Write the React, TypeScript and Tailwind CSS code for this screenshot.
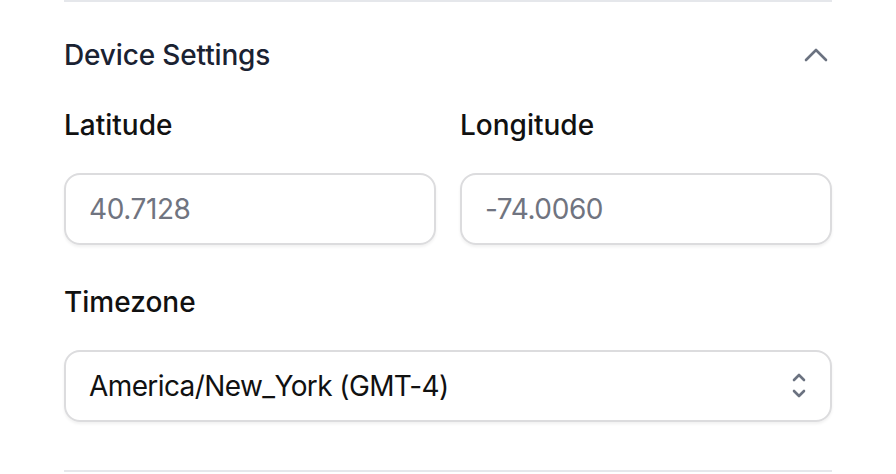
import React from "react";

export default function App() {
  const font = { fontFamily: "Inter, 'Noto Sans', sans-serif" };
  return (
    <div className="w-[896px] h-[474px] bg-white overflow-hidden" style={font}>
      <div className="mx-[64px] border-t-2 border-b-2 border-[#e5e7eb] h-[472px] mt-[0px]">
        <div className="flex items-center justify-between h-[40px] mt-[33px]">
          <span className="text-[28px] leading-[40px] font-medium text-[#1a2232] tracking-[-0.15px]">Device Settings</span>
          <svg width="24" height="14" viewBox="0 0 24 14" className="mr-[4px]">
            <path d="M2 12 L12 2 L22 12" fill="none" stroke="#6b7280" strokeWidth="2.6" strokeLinecap="round" strokeLinejoin="round" />
          </svg>
        </div>
        <div className="grid grid-cols-2 gap-[24px] mt-[30px]">
          <div className="flex flex-col">
            <label className="text-[28px] leading-[40px] font-medium text-[#111]">Latitude</label>
            <div className="mt-[28px] h-[72px] rounded-[16px] border-2 border-[#dcdcde] shadow-[0_2px_3px_rgba(0,0,0,0.06)] flex items-center px-[23px]">
              <span className="text-[28px] text-[#707480] tracking-[-0.4px]">40.7128</span>
            </div>
          </div>
          <div className="flex flex-col">
            <label className="text-[28px] leading-[40px] font-medium text-[#111]">Longitude</label>
            <div className="mt-[28px] h-[72px] rounded-[16px] border-2 border-[#dcdcde] shadow-[0_2px_3px_rgba(0,0,0,0.06)] flex items-center px-[23px]">
              <span className="text-[28px] text-[#707480] tracking-[-0.4px]">-74.0060</span>
            </div>
          </div>
        </div>
        <div className="flex flex-col mt-[37px]">
          <label className="text-[28px] leading-[40px] font-medium text-[#111]">Timezone</label>
          <div className="mt-[28px] h-[72px] rounded-[16px] border-2 border-[#dcdcde] shadow-[0_2px_3px_rgba(0,0,0,0.06)] flex items-center justify-between pl-[23px] pr-[24px]">
            <span className="text-[28px] text-[#111] tracking-[-0.6px]">America/New_York (GMT-4)</span>
            <svg width="14" height="26" viewBox="0 0 14 26">
              <path d="M2 7 L7 2 L12 7" fill="none" stroke="#6b7280" strokeWidth="2.6" strokeLinecap="round" strokeLinejoin="round" />
              <path d="M2 18 L7 23 L12 18" fill="none" stroke="#6b7280" strokeWidth="2.6" strokeLinecap="round" strokeLinejoin="round" />
            </svg>
          </div>
        </div>
      </div>
    </div>
  );
}
